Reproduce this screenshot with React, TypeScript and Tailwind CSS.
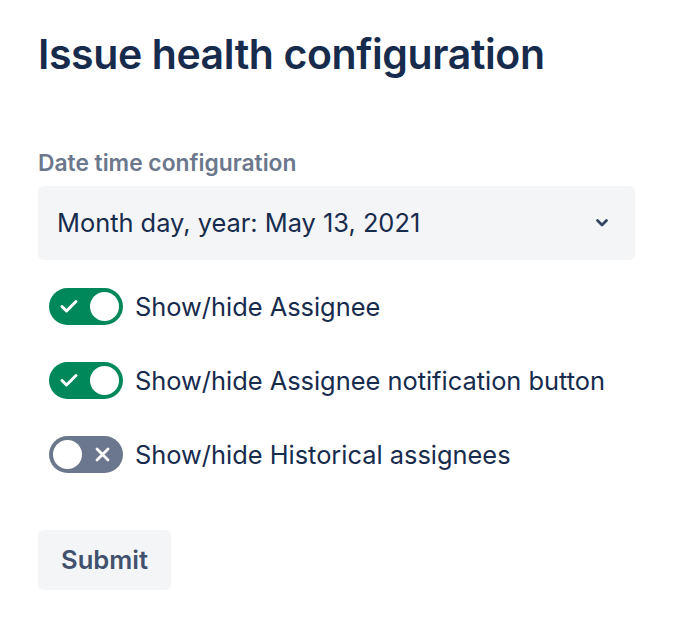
import { useState } from 'react';

function Toggle({ on }: { on: boolean }) {
  return (
    <span
      className={`relative flex h-[37px] w-[74px] shrink-0 items-center rounded-full px-[4px] ${
        on ? 'justify-end bg-[#00875A]' : 'justify-start bg-[#6B778C]'
      }`}
    >
      {on ? (
        <svg className="absolute left-[10px] top-[10px]" width="20" height="16" viewBox="0 0 20 16" fill="none">
          <path d="M3 8.5l4.5 4.5L17 3.5" stroke="white" strokeWidth="3" strokeLinecap="round" strokeLinejoin="round" />
        </svg>
      ) : (
        <svg className="absolute right-[13px] top-[11px]" width="15" height="15" viewBox="0 0 15 15" fill="none">
          <path d="M2 2l11 11M13 2L2 13" stroke="white" strokeWidth="2.8" strokeLinecap="round" />
        </svg>
      )}
      <span className="h-[29px] w-[29px] rounded-full bg-white" />
    </span>
  );
}

export default function App() {
  const [opts] = useState([
    { label: 'Show/hide Assignee', on: true },
    { label: 'Show/hide Assignee notification button', on: true },
    { label: 'Show/hide Historical assignees', on: false },
  ]);

  return (
    <div className="min-h-[625px] bg-white px-[38px] pt-[26px] font-['Inter','Liberation_Sans',sans-serif] text-[#172B4D]">
      <h1 className="text-[41px] font-semibold leading-[56px] tracking-[-0.4px]">Issue health configuration</h1>

      <form className="mt-[65px] w-[597px]" onSubmit={(e) => e.preventDefault()}>
        <label className="block text-[22.8px] font-semibold leading-[32px] text-[#6B778C]">
          Date time configuration
        </label>
        <div className="mt-[7px] flex h-[74px] items-center justify-between rounded-[6px] bg-[#F4F5F7] pl-[19px] pr-[26px]">
          <span className="text-[25.4px] leading-[32px]">Month day, year: May 13, 2021</span>
          <svg width="14" height="10" viewBox="0 0 14 10" fill="none">
            <path d="M2.5 2.5l4.5 4.5 4.5-4.5" stroke="#344563" strokeWidth="2.8" strokeLinecap="round" strokeLinejoin="round" />
          </svg>
        </div>

        <div className="mt-[28px] flex flex-col gap-[37px] pl-[11px]">
          {opts.map((o) => (
            <div key={o.label} className="flex items-center gap-[12px]">
              <Toggle on={o.on} />
              <span className="text-[25.4px] leading-[32px]">{o.label}</span>
            </div>
          ))}
        </div>

        <button
          type="submit"
          className="mt-[57px] h-[60px] rounded-[6px] bg-[#F4F5F7] px-[23px] text-[25.6px] font-semibold text-[#42526E]"
        >
          Submit
        </button>
      </form>
    </div>
  );
}
